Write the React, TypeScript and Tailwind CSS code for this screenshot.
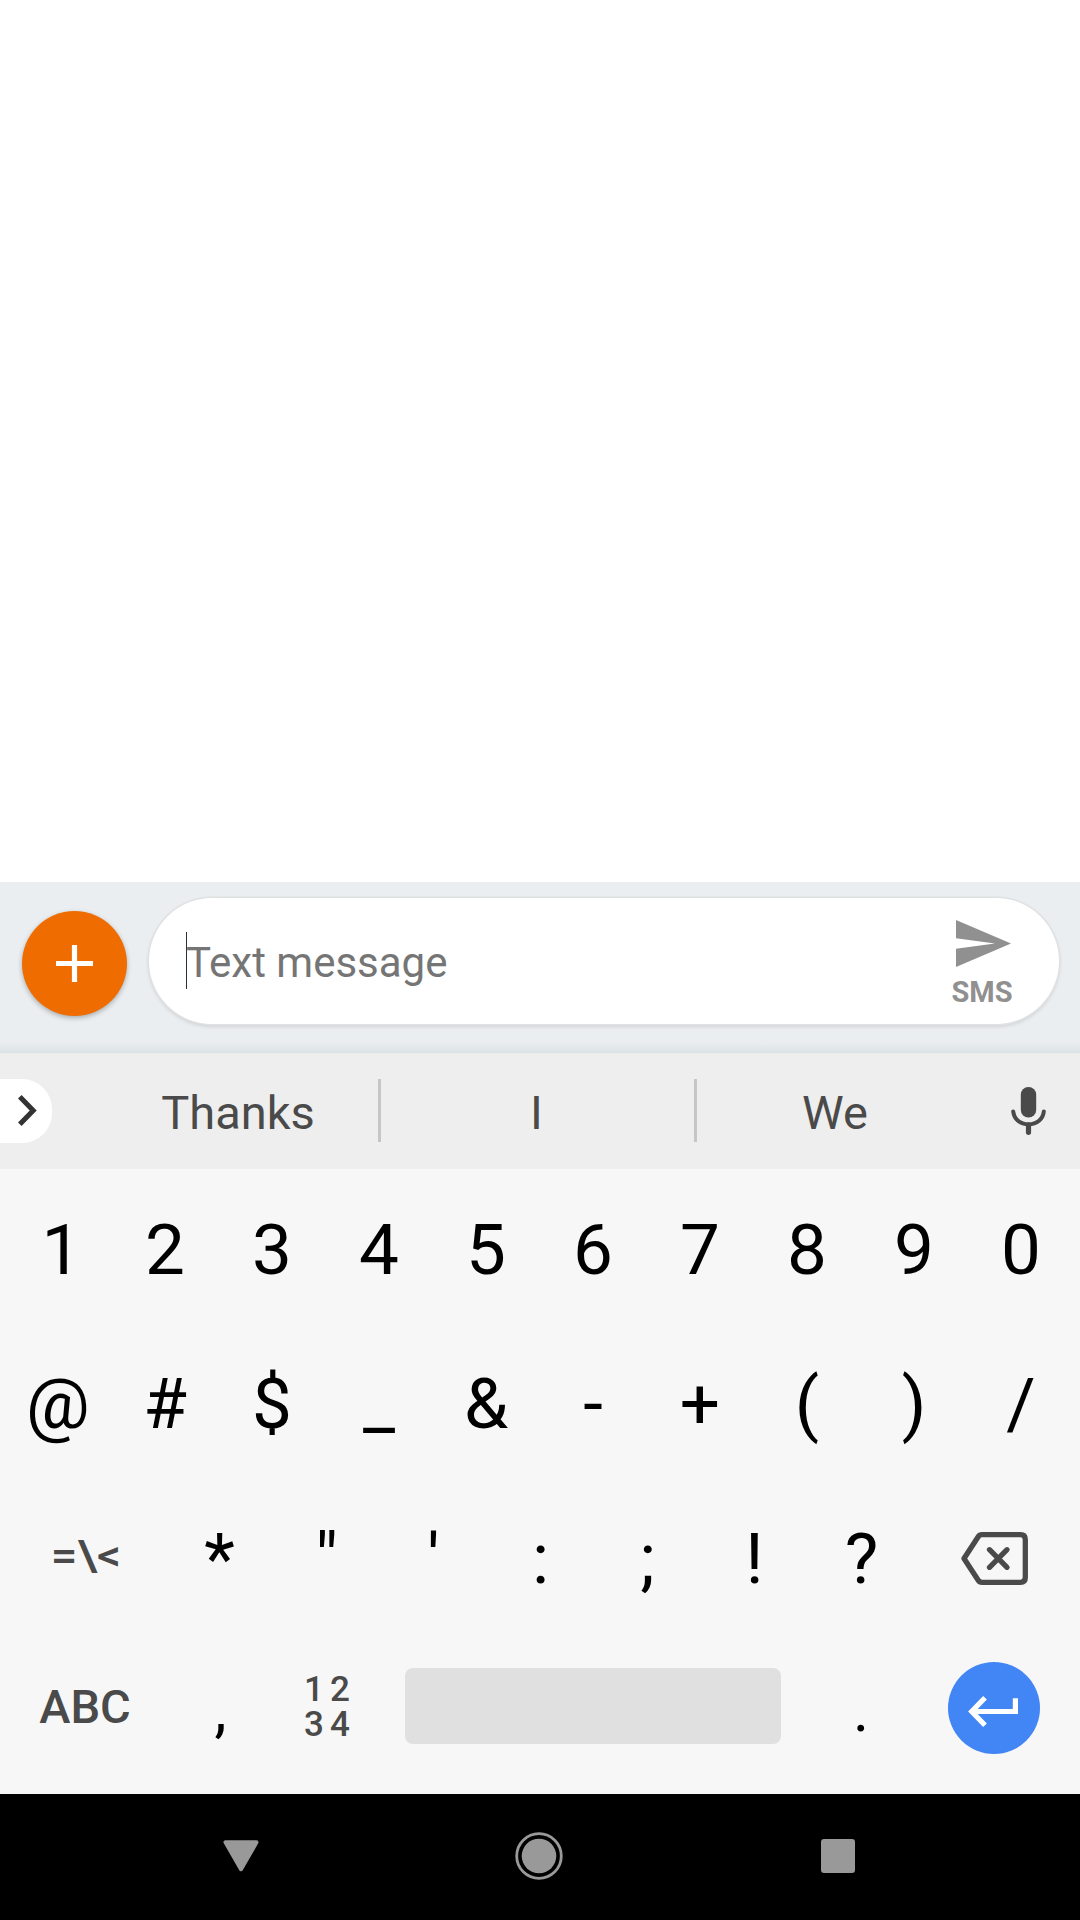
import type { ReactNode } from "react";

function Key({ children, className = "pl-px pt-px" }: { children?: ReactNode; className?: string }) {
  return <div className={`flex w-[107px] items-center justify-center ${className}`}>{children}</div>;
}

function WideKey({ children, className = "" }: { children?: ReactNode; className?: string }) {
  return (
    <div className={`flex flex-1 items-center justify-center font-medium text-[#4a4a4a] ${className}`}>
      {children}
    </div>
  );
}

function Composer() {
  return (
    <div className="flex h-[171px] bg-[#eaeef1] bg-[linear-gradient(to_bottom,transparent_160px,#dbe2e5_171px)] pl-[22px] pr-[21px]">
      <button className="mt-[29px] flex size-[105px] items-center justify-center rounded-full bg-[#ef6c00] shadow-[0_2px_5px_rgba(0,0,0,0.28)]">
        <svg width="37" height="37" viewBox="0 0 37 37" fill="none" stroke="#fff" strokeWidth="5.2">
          <path d="M18.5 0v37M0 18.5h37" />
        </svg>
      </button>
      <div className="ml-[22px] mt-4 flex h-[126px] flex-1 items-center rounded-full bg-white shadow-[0_0_0_1.5px_#e0e1e2,0_2px_4px_rgba(0,0,0,0.16)]">
        <div className="mb-[2px] ml-[37px] h-[57px] w-px bg-[#263238]" />
        <span className="-ml-px flex-1 pt-[3px] text-[42px] leading-[57px] text-[#757575]">Text message</span>
        <div className="mr-[46px] mt-[7px] flex w-[62px] flex-col items-center">
          <svg className="ml-[3px]" width="55" height="47" viewBox="0 0 55 47" fill="#909090">
            <path d="M0 0L55 23.5L0 47V28.7L39 23.5L0 18.3Z" />
          </svg>
          <span className="mt-[8px] text-[29px] font-bold leading-[34px] text-[#909090]">SMS</span>
        </div>
      </div>
    </div>
  );
}

function Suggestions() {
  return (
    <div className="flex h-[116px] items-center bg-[#eeeeee] pb-[1px] text-[47px] leading-none text-[#4a4a4a]">
      <div className="mr-[45px] flex h-16 w-[52px] items-center rounded-r-[30px] bg-white pl-[18px]">
        <svg width="20" height="31" viewBox="0 0 20 31" fill="none" stroke="#333" strokeWidth="5">
          <path d="M1.8 1.8L15.2 15.5L1.8 29.2" />
        </svg>
      </div>
      <span className="w-[281px] pl-px pt-[4px] text-center">Thanks</span>
      <div className="h-[63px] w-[3px] bg-[#c6c6c6]" />
      <span className="w-[313px] pr-[2px] pt-[4px] text-center">I</span>
      <div className="h-[63px] w-[3px] bg-[#c6c6c6]" />
      <span className="w-[276px] pt-[4px] text-center">We</span>
      <svg className="ml-[38px] mt-px" width="35" height="48" viewBox="0 0 35 48" fill="none" stroke="#4a4a4a" strokeWidth="4" strokeLinecap="round">
        <rect x="9.8" y="0" width="15.4" height="30.5" rx="7.5" fill="#4a4a4a" stroke="none" />
        <path d="M2.2 24.5C3 32 9 37.3 17.5 37.3S32 32 32.8 24.5" />
        <path d="M17.5 38V45.3" strokeWidth="5.2" />
      </svg>
    </div>
  );
}

function Keyboard() {
  return (
    <div className="flex h-[625px] flex-col bg-[#f7f7f7] pl-[4px] pr-[6px] pt-[3px] text-[71px] leading-none text-black">
      <div className="flex h-[154px]">
        <Key className="pl-[8px] pt-px">1</Key>
        {["2", "3", "4", "5", "6", "7", "8", "9", "0"].map((k) => <Key key={k}>{k}</Key>)}
      </div>
      <div className="flex h-[154px]">
        {["@", "#", "$", "_", "&", "-", "+", "(", ")", "/"].map((k) => <Key key={k}>{k}</Key>)}
      </div>
      <div className="flex h-[156px]">
        <WideKey className="pb-[5px] pl-[2px] text-[43px]">
          <span className="scale-x-110">{"=\\<"}</span>
        </WideKey>
        {["*", '"', "'", ":", ";", "!", "?"].map((k) => <Key key={k}>{k}</Key>)}
        <WideKey>
          <svg width="67" height="53" viewBox="0 0 67 53" fill="none" stroke="#4a4a4a" strokeWidth="5.3" strokeLinejoin="round" strokeLinecap="round">
            <path d="M21 2.7H59.5Q64.3 2.7 64.3 7.5V45.5Q64.3 50.3 59.5 50.3H21Q18.5 50.3 17.2 48.3L3 26.5L17.2 4.7Q18.5 2.7 21 2.7Z" />
            <path d="M28.5 17.7L46 35.3M46 17.7L28.5 35.3" />
          </svg>
        </WideKey>
      </div>
      <div className="flex h-[140px]">
        <WideKey className="pl-px pt-px text-[47px]">ABC</WideKey>
        <Key className="pl-[4px] pt-[8px] text-[61px]">,</Key>
        <Key className="pl-[9px] pt-[2px] text-[35px] font-medium tracking-[6px] text-[#4a4a4a]">
          <span className="whitespace-pre leading-[35px]">{"12\n34"}</span>
        </Key>
        <div className="mx-[26px] h-[76px] w-[376px] self-center rounded-lg bg-[#e0e0e0]" />
        <Key className="pl-px pt-[8px] text-[61px]">.</Key>
        <WideKey>
          <div className="mt-1 flex size-[92px] items-center justify-center rounded-full bg-[#4285f4]">
            <svg className="mr-[2px] mt-[6px]" width="50" height="31" viewBox="0 0 50 31" fill="none" stroke="#fff" strokeWidth="5.2">
              <path d="M17 1.8L3.7 15.5L17 29.2" />
              <path d="M4 15.5H47.4V2.3" />
            </svg>
          </div>
        </WideKey>
      </div>
    </div>
  );
}

function NavigationBar() {
  return (
    <div className="flex h-[126px] items-center justify-between bg-black pb-[2px] pl-[223px] pr-[225px]">
      <svg width="36" height="32" viewBox="0 0 36 32" fill="#999" stroke="#999" strokeWidth="4" strokeLinejoin="round">
        <path d="M2.5 2.3H33.5L18 29.2Z" />
      </svg>
      <svg className="mr-[2px]" width="48" height="48" viewBox="0 0 48 48">
        <circle cx="24" cy="24" r="22.3" fill="none" stroke="#999" strokeWidth="2.8" />
        <circle cx="24" cy="24" r="17.3" fill="#999" />
      </svg>
      <div className="size-[34px] rounded-[3px] bg-[#999]" />
    </div>
  );
}

export default function App() {
  return (
    <main className="flex h-[1920px] w-[1080px] flex-col overflow-hidden bg-white font-['Roboto',sans-serif]">
      <div className="flex-1" />
      <Composer />
      <Suggestions />
      <Keyboard />
      <NavigationBar />
    </main>
  );
}
